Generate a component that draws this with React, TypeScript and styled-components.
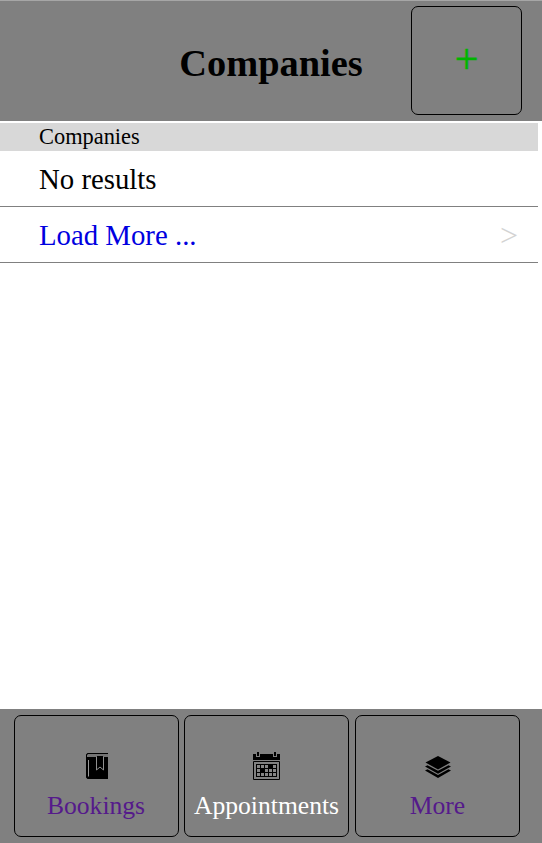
import React from "react";
import styled, { createGlobalStyle } from "styled-components";

const GlobalStyle = createGlobalStyle`
  * { box-sizing: border-box; }
  body { margin: 0; background: #fff; color: #000; font-family: "Liberation Serif", "Times New Roman", serif; }
  a { text-decoration: none; }
`;

const Screen = styled.div`
  display: flex;
  flex-direction: column;
  height: 843px;
  overflow: hidden;
`;

const Header = styled.header`
  display: grid;
  grid-template-columns: 131px 280px 111px;
  height: 121px;
  padding-top: 5px;
  background: #808080;
  border-top: 1px solid #a6a6a6;
`;

const Title = styled.h1`
  margin: 0;
  padding-top: 35px;
  grid-column: 2;
  font-size: 38.4px;
  line-height: 44px;
  text-align: center;
`;

const AddButton = styled.a`
  display: flex;
  justify-content: center;
  height: 109px;
  padding-top: 27px;
  border: 1px solid #000;
  border-radius: 7px;
  color: #00b400;
  font-size: 42px;
  line-height: 50px;
  -webkit-text-stroke: 0.6px #00b400;
`;

const List = styled.main`
  flex: 1;
  width: 538px;
  padding-top: 2px;
`;

const Divider = styled.div`
  height: 28px;
  padding-left: 39px;
  background: #d8d8d8;
  font-size: 22.4px;
  line-height: 28px;
`;

const Row = styled.div<{ $link?: boolean }>`
  display: flex;
  justify-content: space-between;
  height: 56px;
  padding: 0 20px 0 39px;
  border-bottom: 1px solid #808080;
  color: ${(p) => (p.$link ? "#0000e0" : "#000")};
  font-size: 28.8px;
  line-height: 57px;
`;

const Chevron = styled.span`
  color: #d3d3d3;
  font-size: 32px;
`;

const Footer = styled.nav`
  display: grid;
  grid-template-columns: 170px 171px 165px;
  height: 134px;
  padding: 6px 0 0 14px;
  background: #808080;
`;

const Tab = styled.a<{ $active?: boolean }>`
  display: flex;
  flex-direction: column;
  align-items: center;
  width: 165px;
  height: 122px;
  padding-top: 35px;
  border: 1px solid #000;
  border-radius: 7px;
  color: ${(p) => (p.$active ? "#fff" : "#551a8b")};
  font-size: 25.6px;
  line-height: 30px;
`;

const Label = styled.span`
  ${Tab}:first-child & {
    margin-right: 1px;
  }
`;

const Icon = styled.svg`
  display: block;
  width: 31px;
  height: 30px;
  margin-bottom: 10px;
  flex: none;
`;

const BookIcon = () => (
  <Icon viewBox="0 0 31 30">
    <path d="M6.5 2H27v1H7.5L6 4v2h21v22H6.5L5 26.5v-23Z" />
    <path d="M7.5 9v16.5" stroke="#999" fill="none" />
    <path d="M15.5 5.5v13.5l3.5-3 3.5 3V5.5Z" stroke="#909090" />
    <path d="M7.5 3H27v3H6V4.5Z" fill="#747474" />
    <path d="M16 5h6v2h-6Z" />
  </Icon>
);

const CalendarIcon = () => (
  <Icon viewBox="0 0 31 30">
    <path d="M2 3h3v3h4V3h14v3h3V3h3v6H2Z" />
    <path d="M5 3h4v3H5ZM22 3h4v3h-4Z" fill="#808080" />
    <path d="M6 1h2v4H6ZM23 1h2v4h-2Z" />
    <path d="M2.5 10.5h26v18h-26Z" fill="none" stroke="#000" />
    <path d="M5 13h21v13H5Z" />
    <path
      d="M6 14h3v3H6ZM10 14h3v3h-3ZM14 14h3v3h-3ZM22 14h3v3h-3ZM6 18h3v3H6ZM14 18h3v3h-3ZM18 18h3v3h-3ZM22 18h3v3h-3ZM6 22h3v3H6ZM10 22h3v3h-3ZM14 22h3v3h-3ZM18 22h3v3h-3ZM22 22h3v3h-3Z"
      fill="#858585"
    />
  </Icon>
);

const LayersIcon = () => (
  <Icon viewBox="0 0 31 30">
    <path d="M16 5 28.5 11.5 16 18.5 3.5 11.5Z" />
    <path d="M3 15.5 5.5 14.3 16 19.7l10.5-5.4 2.5 1.2L16 22.8ZM3 19.5 5.5 18.3 16 24l10.5-5.7 2.5 1.2L16 27Z" />
  </Icon>
);

export default function App() {
  return (
    <Screen>
      <GlobalStyle />
      <Header>
        <Title>Companies</Title>
        <AddButton>+</AddButton>
      </Header>
      <List>
        <Divider>Companies</Divider>
        <Row>No results</Row>
        <Row $link>
          Load More ...
          <Chevron>&gt;</Chevron>
        </Row>
      </List>
      <Footer>
        <Tab>
          <BookIcon />
          <Label>Bookings</Label>
        </Tab>
        <Tab $active>
          <CalendarIcon />
          <Label>Appointments</Label>
        </Tab>
        <Tab>
          <LayersIcon />
          <Label>More</Label>
        </Tab>
      </Footer>
    </Screen>
  );
}
